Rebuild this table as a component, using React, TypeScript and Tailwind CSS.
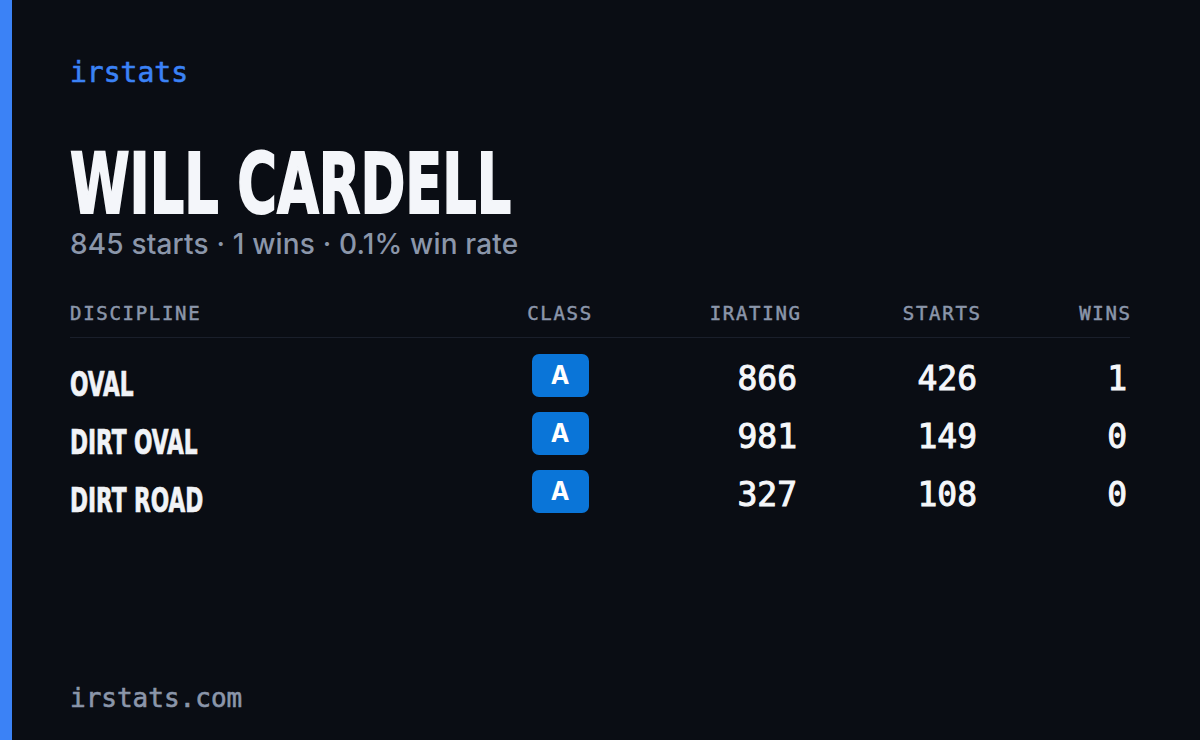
import React from "react";

const rows = [
  { name: "OVAL", cls: "A", irating: "866", starts: "426", wins: "1" },
  { name: "DIRT OVAL", cls: "A", irating: "981", starts: "149", wins: "0" },
  { name: "DIRT ROAD", cls: "A", irating: "327", starts: "108", wins: "0" },
];

const mono = "font-['DejaVu_Sans_Mono',monospace]";
const cond = "font-['DejaVu_Sans',sans-serif] font-stretch-condensed font-bold";

export default function App() {
  return (
    <div className="w-[1200px] h-[740px] bg-[#0a0d14] flex overflow-hidden">
      <div className="w-[12px] h-full bg-[#3b82f6] shrink-0" />
      <div className="flex-1 flex flex-col pl-[58px] pr-[58px] pt-[59px] pb-[29px]">
        <div className={`${mono} text-[28px] leading-[28px] text-[#3b82f6] [-webkit-text-stroke:0.6px_#3b82f6]`}>irstats</div>

        <div className="mt-[55px] h-[84px] whitespace-nowrap">
          <div className={`${cond} inline-block origin-left scale-x-[0.715] text-[84px] leading-[84px] text-[#f4f6fa] [-webkit-text-stroke:2px_#f4f6fa]`}>
            WILL CARDELL
          </div>
        </div>

        <div className="mt-[4px] font-['Inter',sans-serif] font-medium text-[28px] leading-[28px] tracking-[0.17px] text-[#8b96aa]">
          845 starts · 1 wins · 0.1% win rate
        </div>

        <div className="mt-[46px] w-[1060px]">
          <div className={`${mono} grid grid-cols-[430px_120px_180px_180px_150px] text-[19px] leading-[19px] tracking-[1.7px] text-[#8b96aa] [-webkit-text-stroke:0.5px_#8b96aa] pb-[14px] border-b border-[#1a1f2b]`}>
            <div>DISCIPLINE</div>
            <div className="text-center">CLASS</div>
            <div className="text-right -mr-[1.7px]">IRATING</div>
            <div className="text-right -mr-[1.7px]">STARTS</div>
            <div className="text-right -mr-[1.7px]">WINS</div>
          </div>

          <div className="mt-[16px] flex flex-col">
            {rows.map((r) => (
              <div key={r.name} className="grid grid-cols-[430px_120px_180px_180px_150px] h-[58px] items-start">
                <div className="pt-[14px] whitespace-nowrap">
                  <div className={`${cond} inline-block origin-left scale-x-[0.73] text-[33px] leading-[33px] text-[#f1f3f7] [-webkit-text-stroke:0.7px_#f1f3f7]`}>
                    {r.name}
                  </div>
                </div>
                <div className="flex justify-center">
                  <div className="w-[57px] h-[43px] rounded-[7px] bg-[#0a75d8] flex items-center justify-center font-['Inter',sans-serif] font-bold text-[25px] leading-none text-white">
                    {r.cls}
                  </div>
                </div>
                <div className={`${mono} pt-[8px] pr-[3px] text-right text-[33px] leading-[33px] text-[#f5f7fa] [-webkit-text-stroke:1px_#f5f7fa]`}>{r.irating}</div>
                <div className={`${mono} pt-[8px] pr-[3px] text-right text-[33px] leading-[33px] text-[#f5f7fa] [-webkit-text-stroke:1px_#f5f7fa]`}>{r.starts}</div>
                <div className={`${mono} pt-[8px] pr-[3px] text-right text-[33px] leading-[33px] text-[#f5f7fa] [-webkit-text-stroke:1px_#f5f7fa]`}>{r.wins}</div>
              </div>
            ))}
          </div>
        </div>

        <div className={`mt-auto ${mono} text-[26px] leading-[26px] text-[#8b96aa] [-webkit-text-stroke:0.6px_#8b96aa]`}>irstats.com</div>
      </div>
    </div>
  );
}
